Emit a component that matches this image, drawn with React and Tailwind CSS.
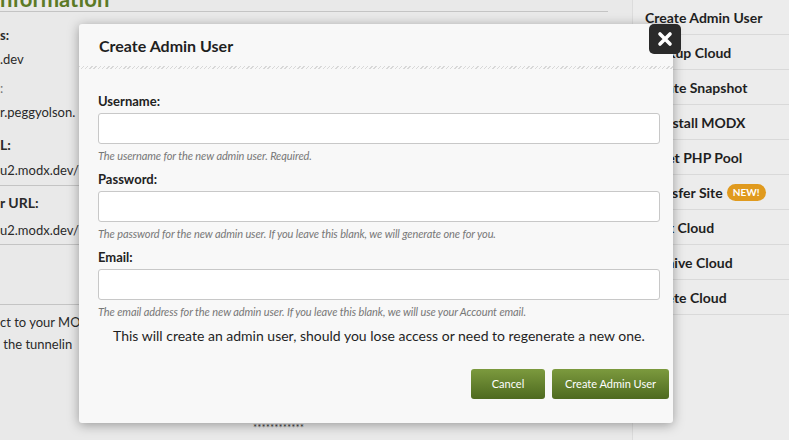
import React from "react";

const sideItems = [
  "Create Admin User",
  "Backup Cloud",
  "Create Snapshot",
  "Reinstall MODX",
  "Reset PHP Pool",
  "Transfer Site",
  "Lock Cloud",
  "Archive Cloud",
  "Delete Cloud",
];

function Field({ label, hint }) {
  return (
    <div className="mb-[8px]">
      <div className="text-[13px] font-bold text-[#222] leading-[16px] mb-[4px]">{label}</div>
      <div className="h-[31px] bg-white border border-[#c8c8c8] rounded-[3px]" />
      <div className="mt-[5px] text-[11px] leading-[14px] italic text-[#777] tracking-[-0.1px]">{hint}</div>
    </div>
  );
}

export default function App() {
  return (
    <div
      className="relative w-[789px] h-[440px] overflow-hidden bg-[#e9e9e9]"
      style={{ fontFamily: "Lato, 'Open Sans', sans-serif" }}
    >
      <div className="flex h-full">
        <div className="w-[632px] relative text-[#2a2a2a]">
          <div className="text-[22px] font-bold text-[#5c7a26] leading-none -mt-[12px]">nformation</div>
          <div className="h-px bg-[#c4c4c4] w-[608px] mt-[1px]" />
          <div className="text-[13px]">
            <div className="font-bold mt-[14px]">s:</div>
            <div className="mt-[4px]">.dev</div>
            <div className="mt-[10px] text-[#777]">:</div>
            <div className="mt-[4px]">r.peggyolson.</div>
            <div className="font-bold mt-[12px] text-[14px]">L:</div>
            <div className="mt-[6px] border-b border-[#c4c4c4] pb-[4px] w-[80px]">u2.modx.dev/</div>
            <div className="font-bold mt-[6px] text-[14px]">r URL:</div>
            <div className="mt-[8px] border-b border-[#c4c4c4] pb-[4px] w-[80px]">u2.modx.dev/</div>
            <div className="border-b border-[#c4c4c4] w-[80px] h-[60px]" />
            <div className="mt-[8px]">ct to your MO</div>
            <div className="mt-[2px]">&nbsp;the tunnelin</div>
          </div>
          <div className="absolute left-[253px] top-[420px] text-[10px] text-[#333]">************</div>
        </div>
        <div className="flex-1 bg-[#ececec] border-l border-[#dcdcdc]">
          {sideItems.map((s) => (
            <div key={s} className="h-[35px] border-b border-[#d9d9d9] flex items-center pl-[12px] text-[14px] font-bold text-[#1f1f1f]">
              {s}
              {s === "Transfer Site" && (
                <span className="ml-[4px] bg-[#e09a1e] text-white text-[10px] font-bold rounded-full px-[6px] py-[1px]">NEW!</span>
              )}
            </div>
          ))}
        </div>
      </div>

      <div className="absolute left-[79px] top-[24px] w-[594px] h-[399px] bg-[#f8f8f8] rounded-[3px] shadow-[0_2px_12px_rgba(0,0,0,0.35)]">
        <div className="h-[42px] flex items-center pl-[20px] text-[16px] font-bold text-[#1f1f1f] pt-[2px]">Create Admin User</div>
        <div className="h-[3px] bg-[repeating-linear-gradient(135deg,#d8d8d8_0_1px,transparent_1px_3px)]" />
        <div className="pl-[19px] pr-[13px] pt-[24px]">
          <Field label="Username:" hint="The username for the new admin user. Required." />
          <Field label="Password:" hint="The password for the new admin user. If you leave this blank, we will generate one for you." />
          <Field label="Email:" hint="The email address for the new admin user. If you leave this blank, we will use your Account email." />
          <div className="pl-[15px] mt-[8px] text-[14px] leading-[18px] text-[#1f1f1f]">
            This will create an admin user, should you lose access or need to regenerate a new one.
          </div>
          <div className="flex justify-end gap-[7px] mt-[24px] mr-[-9px]">
            <button className="h-[30px] w-[74px] rounded-[3px] text-white text-[11px] bg-gradient-to-b from-[#7c9a3e] to-[#4e6a1f]">Cancel</button>
            <button className="h-[30px] w-[117px] rounded-[3px] text-white text-[11px] bg-gradient-to-b from-[#7c9a3e] to-[#4e6a1f]">Create Admin User</button>
          </div>
        </div>
      </div>

      <div className="absolute left-[649px] top-[24px] w-[32px] h-[30px] bg-[#2a2a2a] rounded-[5px] flex items-center justify-center">
        <svg width="16" height="16" viewBox="0 0 16 16">
          <path d="M3 3L13 13M13 3L3 13" stroke="white" strokeWidth="3.6" strokeLinecap="round" />
        </svg>
      </div>
    </div>
  );
}
